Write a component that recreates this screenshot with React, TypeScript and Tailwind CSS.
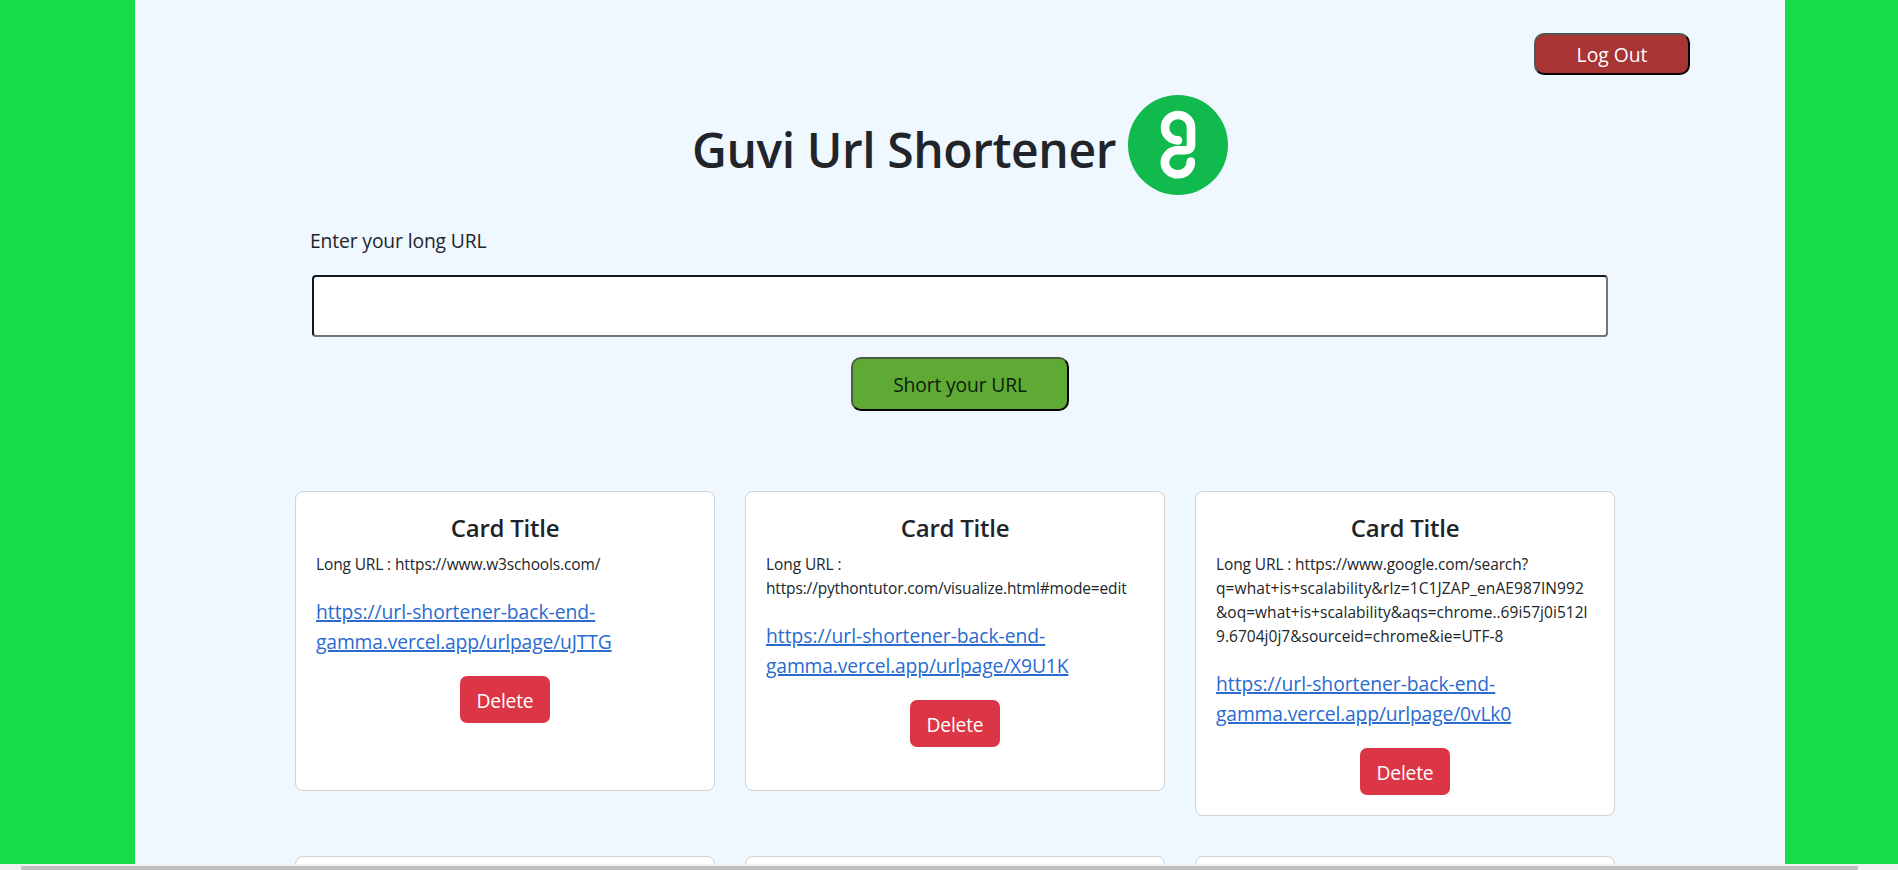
type Line = { text: string; tracking: string };
type CardData = { lines: Line[]; code: string };

const cards: CardData[] = [
  {
    lines: [{ text: "Long URL : https://www.w3schools.com/", tracking: "tracking-[-0.14px]" }],
    code: "uJTTG",
  },
  {
    lines: [
      { text: "Long URL :", tracking: "tracking-[-0.09px]" },
      { text: "https://pythontutor.com/visualize.html#mode=edit", tracking: "tracking-[-0.15px]" },
    ],
    code: "X9U1K",
  },
  {
    lines: [
      { text: "Long URL : https://www.google.com/search?", tracking: "tracking-[-0.12px]" },
      { text: "q=what+is+scalability&rlz=1C1JZAP_enAE987IN992", tracking: "tracking-[0.1px]" },
      { text: "&oq=what+is+scalability&aqs=chrome..69i57j0i512l", tracking: "tracking-[0.03px]" },
      { text: "9.6704j0j7&sourceid=chrome&ie=UTF-8", tracking: "tracking-[0.03px]" },
    ],
    code: "0vLk0",
  },
];

function Logo() {
  return (
    <svg viewBox="0 0 100 100" className="size-[100px]" fill="none">
      <circle cx="50" cy="50" r="50" fill="#10ba4c" />
      <path
        d="M50 45.4A13 12.7 0 1 1 63 33.5V49.5Q63 55.3 57 55.3H50A13 12 0 1 0 62.8 66.6"
        stroke="#fff"
        strokeWidth="8.6"
        strokeLinecap="round"
        strokeLinejoin="round"
      />
    </svg>
  );
}

function Card({ lines, code }: CardData) {
  return (
    <div className="min-h-[300px] rounded-lg border border-[#cfd3d6] bg-white p-5">
      <h5 className="mb-[9px] pt-px text-center text-[24px] leading-[30px] font-semibold tracking-[-0.25px]">
        Card Title
      </h5>
      <p className="mb-[21px] text-[15.5px] leading-6">
        {lines.map((l) => (
          <span key={l.text} className={`block whitespace-nowrap ${l.tracking}`}>
            {l.text}
          </span>
        ))}
      </p>
      <a
        href="#"
        className="block leading-[30px] text-[#2a6bd0] underline decoration-[2px] underline-offset-1"
      >
        <span className="tracking-[-0.03px]">https://url-shortener-back-end-</span>
        <br />
        <span className="tracking-[-0.15px]">gamma.vercel.app/urlpage/{code}</span>
      </a>
      <div className="mt-[19px] flex justify-center">
        <button className="h-[47px] w-[90px] rounded-[7px] bg-[#dc3545] pt-[3px] tracking-[-0.2px] text-white">Delete</button>
      </div>
    </div>
  );
}

export default function App() {
  return (
    <div className="flex h-[870px] flex-col overflow-hidden bg-[#f1f1f1] font-['Open_Sans','Noto_Sans',sans-serif] text-[19.3px] text-[#212529]">
      <div className="flex h-[864px] shrink-0 overflow-hidden bg-[#17dd48] pl-[135px]">
        <main className="w-[1650px] bg-[#eff7ff]">
          <div className="flex justify-end pt-[33px] pr-[95px]">
            <button className="h-[42px] w-[156px] rounded-[10px] border-2 border-t-[#555] border-r-black border-b-black border-l-[#555] bg-[#a83434] pt-[2px] text-white">
              Log Out
            </button>
          </div>
          <div className="mt-5 flex h-[100px] items-center justify-center">
            <h1 className="mt-[9px] mr-3 text-[48px] leading-[60px] font-semibold tracking-[-0.42px] whitespace-nowrap">
              Guvi Url Shortener
            </h1>
            <Logo />
          </div>
          <div className="mx-[175px] mt-[31px]">
            <label className="block leading-[30px] tracking-[-0.13px]">Enter your long URL</label>
            <input className="mt-[19px] ml-[2px] block h-[62px] w-[1296px] rounded-[4px] border-2 border-t-[#15191c] border-r-[#767676] border-b-[#767676] border-l-[#15191c] bg-white px-3 outline-none" />
          </div>
          <div className="mt-5 flex justify-center">
            <button className="h-[54px] w-[218px] rounded-[10px] border-2 border-t-[#4c5c46] border-r-black border-b-black border-l-[#4c5c46] bg-[#5eaa34] pt-[2px] tracking-[-0.15px] text-[#10200c]">
              Short your URL
            </button>
          </div>
          <div className="mt-20 ml-[160px] grid w-[1320px] grid-cols-3 items-start gap-x-[30px] gap-y-10">
            {cards.map((c) => (
              <Card key={c.code} {...c} />
            ))}
            <div className="h-[300px] rounded-lg border border-[#cfd3d6] bg-white" />
            <div className="h-[300px] rounded-lg border border-[#cfd3d6] bg-white" />
            <div className="h-[300px] rounded-lg border border-[#cfd3d6] bg-white" />
          </div>
        </main>
      </div>
      <div className="h-1.5 pt-0.5 pr-10 pl-[21px]">
        <div className="h-1 bg-[#c1c1c1]" />
      </div>
    </div>
  );
}
